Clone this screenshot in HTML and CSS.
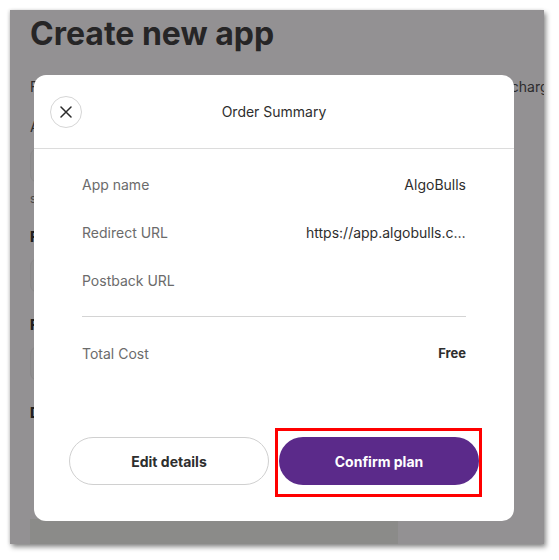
FILE: index.html
```html
<!DOCTYPE html>
<html lang="en">
<head>
<meta charset="utf-8">
<title>Create new app</title>
<link rel="stylesheet" href="styles.css">
</head>
<body>
<div class="frame">
  <h1 class="title">Create new app</h1>
  <p class="intro">Fill in all the details below to create your apps. Creating an app is free of charges</p>
  <div class="label">App name</div>
  <div class="input"></div>
  <div class="helper">suggested: AlgoBulls</div>
  <div class="label bold">Redirect URL</div>
  <div class="input"></div>
  <div class="label bold second">Postback URL</div>
  <div class="input"></div>
  <div class="label bold second">Description</div>
  <div class="block"></div>

  <div class="modal">
    <div class="modal-head">
      <button class="close" aria-label="Close">
        <svg width="12" height="12" viewBox="0 0 12 12"><path d="M1 1L11 11M11 1L1 11" stroke="#2b2b2b" stroke-width="1.5" fill="none" stroke-linecap="round"/></svg>
      </button>
      <div class="modal-title">Order Summary</div>
      <span></span>
    </div>
    <div class="modal-body">
      <div class="row"><span class="k">App name</span><span class="v">AlgoBulls</span></div>
      <div class="row"><span class="k">Redirect URL</span><span class="v trunc">https://app.algobulls.com/callback</span></div>
      <div class="row"><span class="k">Postback URL</span><span class="v"></span></div>
      <div class="divider"></div>
      <div class="row"><span class="k">Total Cost</span><span class="v strong">Free</span></div>
    </div>
    <div class="modal-actions">
      <button class="btn btn-outline">Edit details</button>
      <div class="highlight"><button class="btn btn-primary">Confirm plan</button></div>
    </div>
  </div>
</div>
</body>
</html>
```
FILE: styles.css
```css
html, body {
  margin: 0;
  padding: 0;
  background: #ffffff;
}
body {
  font-family: Inter, "Liberation Sans", sans-serif;
  padding: 10px;
  width: 559px;
  height: 560px;
  box-sizing: border-box;
}
.frame {
  position: relative;
  width: 534px;
  height: 534px;
  background: #939193;
  overflow: hidden;
  box-sizing: border-box;
  padding: 4px 20px 0 20px;
  box-shadow: 2px 3px 5px rgba(0, 0, 0, 0.45), -1px 0 3px rgba(0, 0, 0, 0.12);
}
.title {
  margin: 0;
  font-size: 32px;
  line-height: 40px;
  font-weight: 700;
  color: #262526;
  letter-spacing: 0;
}
.intro {
  margin: 23px 0 0 0;
  font-size: 14px;
  line-height: 20px;
  color: #2d2c2d;
  white-space: nowrap;
}
.label {
  margin-top: 20px;
  font-size: 14px;
  line-height: 20px;
  color: #2d2c2d;
}
.label.bold {
  font-weight: 800;
  color: #1f1f1f;
}
.label.second {
  margin-top: 22px;
}
.input {
  margin-top: 11px;
  height: 35px;
  width: 480px;
  border-radius: 8px;
  background: #8f8e8f;
  border: 1px solid #8a898a;
  box-sizing: border-box;
}
.helper {
  margin-top: 8px;
  font-size: 12px;
  line-height: 16px;
  color: #4a494a;
}
.block {
  margin-top: 96px;
  width: 368px;
  height: 40px;
  background: #8b8b89;
}
.modal {
  position: absolute;
  left: 24px;
  top: 65px;
  width: 480px;
  height: 446px;
  background: #ffffff;
  border-radius: 12px;
  display: flex;
  flex-direction: column;
}
.modal-head {
  height: 73px;
  border-bottom: 1px solid #dcdcdc;
  display: grid;
  grid-template-columns: 32px 1fr 32px;
  align-items: center;
  padding: 0 16px;
}
.close {
  width: 32px;
  height: 32px;
  border-radius: 50%;
  border: 1px solid #d6d6d6;
  background: #fff;
  padding: 0;
  display: flex;
  align-items: center;
  justify-content: center;
  cursor: pointer;
}
.close svg {
  display: block;
}
.modal-title {
  text-align: center;
  font-size: 14px;
  color: #2e2e2e;
}
.modal-body {
  padding: 11px 48px 0 48px;
}
.row {
  height: 48px;
  display: flex;
  align-items: center;
  justify-content: space-between;
  font-size: 14px;
}
.k {
  color: #6b6b6b;
  white-space: nowrap;
}
.v {
  color: #2e2e2e;
}
.v.trunc {
  max-width: 160px;
  overflow: hidden;
  white-space: nowrap;
  text-overflow: ellipsis;
}
.v.strong {
  font-weight: 700;
  font-size: 13px;
}
.divider {
  height: 1px;
  background: #d4d4d4;
  margin: 12px 0;
}
.modal-actions {
  margin-top: 60px;
  padding: 0 35px;
  display: flex;
  gap: 10px;
}
.btn {
  width: 200px;
  height: 48px;
  border-radius: 24px;
  font-family: Inter, "Liberation Sans", sans-serif;
  font-size: 14px;
  font-weight: 700;
  cursor: pointer;
}
.btn-outline {
  background: #ffffff;
  border: 1px solid #d0d0d0;
  color: #2e2e2e;
}
.btn-primary {
  background: #5b2a8a;
  border: none;
  color: #ffffff;
  display: block;
}
.highlight {
  position: relative;
}
.highlight::after {
  content: "";
  position: absolute;
  top: -9px;
  left: -4px;
  right: -3px;
  bottom: -12px;
  border: 3px solid #ff0000;
  pointer-events: none;
}
```
